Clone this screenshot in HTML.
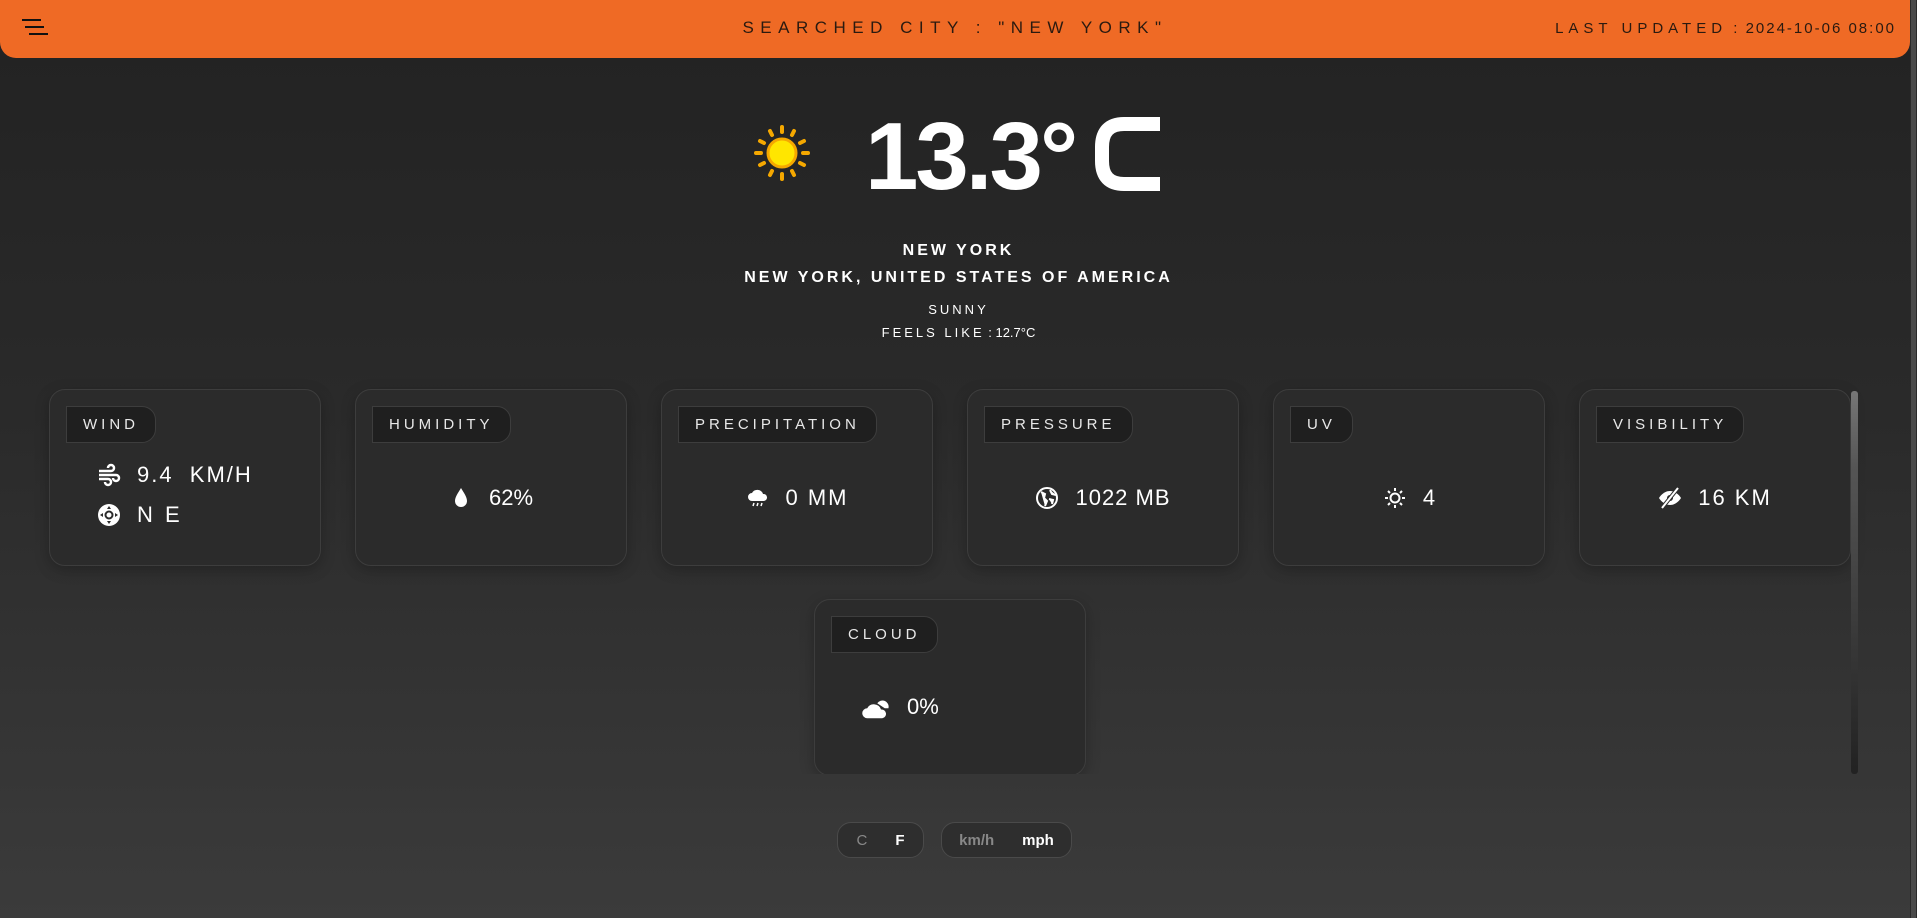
<!DOCTYPE html>
<html><head><meta charset="utf-8"><style>
*{margin:0;padding:0;box-sizing:border-box}
html,body{width:1917px;height:918px;overflow:hidden}
body{background:linear-gradient(#222 0%,#2a2a2a 45%,#3b3b3b 100%);font-family:"Liberation Sans",sans-serif;color:#fff;position:relative}
.hdr{position:absolute;left:0;top:0;width:1910px;height:58px;background:#ef6a25;border-radius:0 0 16px 16px}
.sp{text-transform:uppercase;letter-spacing:3px}
.hdr .t{position:absolute;left:0;right:0;top:18px;text-align:center;font-size:17px;color:#2a1a10;letter-spacing:6.5px}
.hdr .u{position:absolute;right:14px;top:20px;font-size:15px;color:#2a1a10;letter-spacing:2px}
.hdr .u .sp{letter-spacing:5px}
.menu{position:absolute;left:22px;top:19px}
.menu i{display:block;height:2px;background:#111;margin-bottom:5px}
.pbar{position:absolute;right:0;top:0;width:7px;height:918px;background:#2a2a2a}
.pbar b{position:absolute;left:1px;top:0;width:5px;height:918px;background:#4a4a4a}
.temp{position:absolute;left:865px;top:102px;font-size:96px;font-weight:bold;letter-spacing:-3px}
.c1{position:absolute;left:0;right:0;text-align:center}
.card{position:absolute;width:272px;height:177px;border:1px solid #3d3d3d;border-radius:16px;background:#2b2b2b;box-shadow:0 4px 14px rgba(0,0,0,.25)}
.lab{position:absolute;left:16px;top:16px;height:37px;padding:0 16px;border:1px solid #3d3d3d;border-radius:0 14px 14px 0;background:#1f1f1f;font-size:15px;line-height:36px;letter-spacing:4px;text-transform:uppercase;color:#e8e8e8}
.val{position:absolute;left:0;right:0;top:95px;display:flex;align-items:center;justify-content:center;font-size:22px;gap:16px}
.val svg{width:24px;height:24px}
.tog{position:absolute;top:822px;height:36px;border:1px solid #4a4a4a;border-radius:14px;background:#2e2e2e;display:flex;align-items:center;justify-content:center;gap:28px;font-size:15px;font-weight:bold}
</style></head><body>
<div class="hdr">
 <div class="menu"><i style="width:19px"></i><i style="width:19px;margin-left:3px"></i><i style="width:19px;margin-left:7px"></i></div>
 <div class="t sp">SEARCHED CITY : "NEW YORK"</div>
 <div class="u"><span class="sp">LAST UPDATED</span> : 2024-10-06 08:00</div>
</div>
<div class="pbar"><b></b></div>
<svg style="position:absolute;left:754px;top:125px" width="56" height="56" viewBox="-28 -28 56 56">
<g stroke="#f5a800" stroke-width="4" stroke-linecap="round">
<line x1="0" y1="-26" x2="0" y2="-21"/><line x1="0" y1="26" x2="0" y2="21"/><line x1="-26" y1="0" x2="-21" y2="0"/><line x1="26" y1="0" x2="21" y2="0"/>
<line x1="-12" y1="-22" x2="-10" y2="-18"/><line x1="12" y1="-22" x2="10" y2="-18"/><line x1="-12" y1="22" x2="-10" y2="18"/><line x1="12" y1="22" x2="10" y2="18"/>
<line x1="-22" y1="-12" x2="-18" y2="-10"/><line x1="22" y1="-12" x2="18" y2="-10"/><line x1="-22" y1="12" x2="-18" y2="10"/><line x1="22" y1="12" x2="18" y2="10"/></g>
<circle r="14" fill="#ffe600" stroke="#f5a800" stroke-width="3"/></svg>
<div class="temp">13.3°</div>
<svg style="position:absolute;left:1094px;top:117px" width="68" height="74"><path d="M66 7H30Q8 7 8 30V44Q8 67 30 67H66" fill="none" stroke="#fff" stroke-width="14"/></svg>
<div class="c1 sp" style="top:242px;font-size:16px;font-weight:bold">NEW YORK</div>
<div class="c1 sp" style="top:269px;font-size:16px;font-weight:bold">NEW YORK, UNITED STATES OF AMERICA</div>
<div class="c1 sp" style="top:302px;font-size:13px">SUNNY</div>
<div class="c1" style="top:325px;font-size:13px"><span class="sp">FEELS LIKE</span> : 12.7°C</div>

<div class="card" style="left:49px;top:389px"><div class="lab">WIND</div>
 <div class="val" style="top:72px;justify-content:flex-start;left:47px"><svg viewBox="0 0 24 24"><path d="M2 8h12a3 3 0 1 0-3-3M2 12h17a3 3 0 1 1-3 3M2 16h9a3 3 0 1 1-3 3" fill="none" stroke="#fff" stroke-width="2.5"/></svg><span class="sp" style="letter-spacing:2px">9.4&nbsp; KM/H</span></div>
 <div class="val" style="top:112px;justify-content:flex-start;left:47px"><svg viewBox="0 0 24 24"><circle cx="12" cy="12" r="11" fill="#fff"/><circle cx="12" cy="12" r="3.5" fill="none" stroke="#2b2b2b" stroke-width="2"/><path d="M12 3l2 3h-4zM12 21l2-3h-4zM3 12l3 2v-4zM21 12l-3 2v-4z" fill="#2b2b2b"/></svg><span class="sp">N E</span></div></div>
<div class="card" style="left:355px;top:389px"><div class="lab">HUMIDITY</div>
 <div class="val"><svg viewBox="0 0 24 24"><path d="M12 2C9 7 6 11 6 15a6 6 0 0 0 12 0c0-4-3-8-6-13z" fill="#fff"/></svg><span>62%</span></div></div>
<div class="card" style="left:661px;top:389px"><div class="lab">PRECIPITATION</div>
 <div class="val"><svg viewBox="0 0 24 24"><path d="M6 15a4 4 0 0 1 0-8 6 6 0 0 1 11 1 3.5 3.5 0 0 1 1 7z" fill="#fff"/><path d="M8 17l-1 3M12 17l-1 3M16 17l-1 3" stroke="#fff" stroke-width="1.5"/></svg><span class="sp" style="letter-spacing:2px">0 MM</span></div></div>
<div class="card" style="left:967px;top:389px"><div class="lab">PRESSURE</div>
 <div class="val"><svg viewBox="0 0 24 24"><circle cx="12" cy="12" r="10" fill="none" stroke="#fff" stroke-width="2"/><path d="M6 6l4 2-1 4 3 3-2 5M15 4l2 4 4 1M14 13l4 1-1 4" fill="#fff" stroke="#fff" stroke-width="2"/></svg><span class="sp" style="letter-spacing:1px">1022 MB</span></div></div>
<div class="card" style="left:1273px;top:389px"><div class="lab">UV</div>
 <div class="val"><svg viewBox="0 0 24 24"><circle cx="12" cy="12" r="4.5" fill="none" stroke="#fff" stroke-width="2"/><path d="M12 2v3M12 19v3M2 12h3M19 12h3M5 5l2 2M17 17l2 2M5 19l2-2M17 7l2-2" stroke="#fff" stroke-width="2"/></svg><span>4</span></div></div>
<div class="card" style="left:1579px;top:389px"><div class="lab">VISIBILITY</div>
 <div class="val"><svg viewBox="0 0 24 24"><path d="M1 12s4-7 11-7 11 7 11 7-4 7-11 7S1 12 1 12z" fill="#fff"/><circle cx="12" cy="12" r="3" fill="#2b2b2b"/><path d="M4 22L20 2" stroke="#2b2b2b" stroke-width="4"/><path d="M4 22L20 2" stroke="#fff" stroke-width="2"/></svg><span class="sp" style="letter-spacing:2px">16 KM</span></div></div>
<div style="position:absolute;left:0;top:590px;width:1917px;height:184px;overflow:hidden">
<div class="card" style="left:814px;top:9px"><div class="lab">CLOUD</div>
 <div class="val" style="justify-content:flex-start;left:46px;top:92px"><svg viewBox="0 0 24 24" style="width:30px;height:30px"><path d="M13 9a5 5 0 0 1 9 4h-3z" fill="#fff"/><path d="M5 21a4 4 0 0 1 0-8 6 6 0 0 1 11 1 3.5 3.5 0 0 1 1 7z" fill="#fff"/></svg><span>0%</span></div></div>
</div>
<div style="position:absolute;left:1851px;top:391px;width:7px;height:383px;background:linear-gradient(#777,#555 20%,#222);border-radius:3px"></div>
<div class="tog" style="left:837px;width:87px"><span style="color:#888;font-weight:normal">C</span><span>F</span></div>
<div class="tog" style="left:941px;width:131px"><span style="color:#888">km/h</span><span>mph</span></div>
</body></html>
